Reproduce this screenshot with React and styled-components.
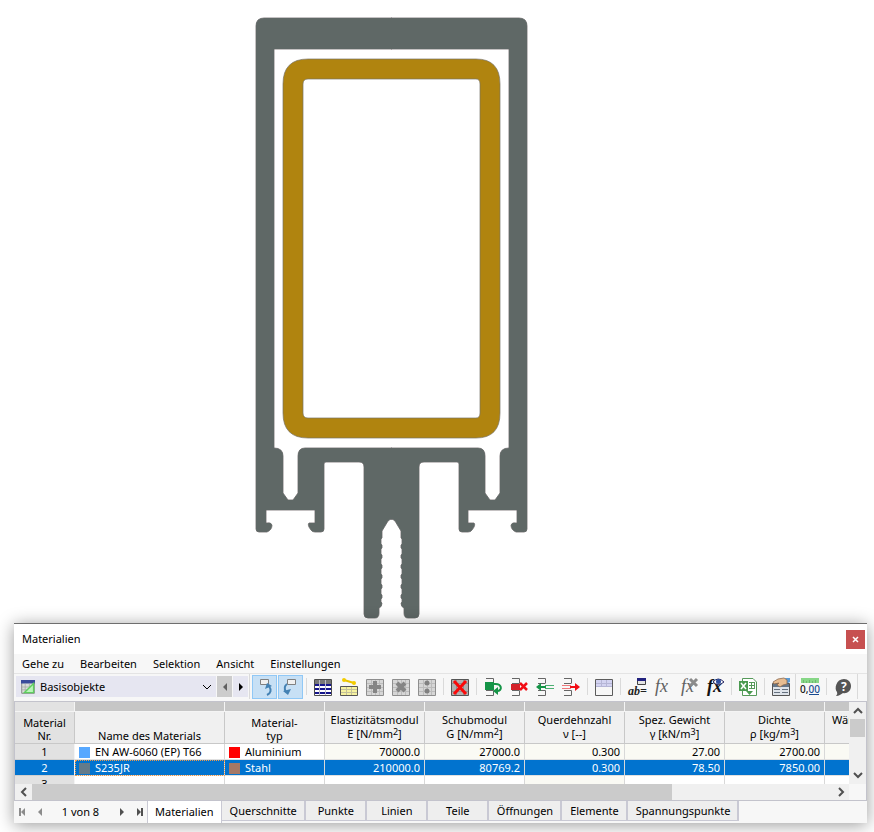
import React, { useState } from "react";
import styled, { createGlobalStyle, css } from "styled-components";

const GlobalStyle = createGlobalStyle`
  * {
    box-sizing: border-box;
  }

  body {
    margin: 0;
    background: #ffffff;
    color: #000000;
    font-family: "Noto Sans", "Open Sans", sans-serif;
    font-size: 11px;
    line-height: 16px;
  }

  button,
  select {
    margin: 0;
    padding: 0;
    border: 0;
    color: inherit;
    font: inherit;
  }

  svg {
    display: block;
    flex: none;
    overflow: visible;
  }
`;

const Page = styled.main`
  display: flex;
  flex-direction: column;
  min-height: 100vh;
  overflow: hidden;
`;

const Canvas = styled.section`
  height: 623px;
`;

const Window = styled.section`
  margin: 0 7px 9px 14px;
  background: #f7f7f7;
  border-top: 1px solid #6e6e6e;
  box-shadow: 0 2px 16px rgba(0, 0, 0, 0.4);
`;

const TitleBar = styled.header`
  display: flex;
  align-items: center;
  justify-content: space-between;
  height: 30px;
  padding: 0 2px 0 8px;
  background: #ffffff;
`;

const Title = styled.h1`
  margin: 0;
  font-size: 11px;
  font-weight: 400;
`;

const CloseButton = styled.button`
  display: flex;
  align-items: center;
  justify-content: center;
  width: 19px;
  height: 19px;
  background: #c75050;
  color: #ffffff;
`;

const MenuBar = styled.nav`
  display: flex;
  align-items: center;
  gap: 16px;
  height: 20px;
  padding: 0 8px;
  border-bottom: 1px solid #e4e4e4;
`;

const MenuItem = styled.button`
  background: none;
`;

const Toolbar = styled.div`
  display: flex;
  align-items: center;
  height: 27px;
  padding: 0 0 2px 2px;
`;

const TableSelect = styled.label`
  display: grid;
  align-items: center;
  width: 200px;
  height: 21px;
  background: #e6e6f1;

  > * {
    grid-area: 1 / 1;
  }

  > svg {
    margin-left: 5px;
    pointer-events: none;
  }

  > svg:last-child {
    justify-self: end;
    margin-right: 4px;
  }
`;

const Select = styled.select`
  appearance: none;
  width: 100%;
  height: 21px;
  padding-left: 24px;
  background: transparent;
`;

const StepButton = styled.button`
  display: flex;
  align-items: center;
  justify-content: center;
  width: 15px;
  height: 21px;
  margin-left: 1px;
  background: ${({ $dim }) => ($dim ? "#cccccc" : "#e6e6f1")};
  color: ${({ $dim }) => ($dim ? "#606060" : "#000000")};
`;

const ToolButton = styled.button`
  display: flex;
  align-items: center;
  justify-content: center;
  width: 26px;
  height: 24px;
  background: none;

  ${({ $pressed }) =>
    $pressed &&
    css`
      width: 25px;
      margin-left: 1px;
      background: #c7e0f5;
      border: 1px solid #90c8f6;
    `}
`;

const Divider = styled.span`
  align-self: stretch;
  width: 1px;
  margin: ${({ $tight }) => ($tight ? "0 1px" : "4px 3px")};
  background: #dadada;
`;

const Grid = styled.div`
  display: grid;
  grid-template-columns: minmax(0, 1fr) 17px;
  border: 1px solid #c3c3cc;
`;

const TableClip = styled.div`
  height: 82px;
  overflow: hidden;
`;

const Table = styled.table`
  width: 910px;
  table-layout: fixed;
  border-collapse: separate;
  border-spacing: 0;
  background: #ffffff;
`;

const StripCell = styled.td`
  height: 10px;
  padding: 0;
  background: ${({ $corner }) => ($corner ? "#e2e2e2" : "#c6c6c6")};
  border-right: 1px solid #f4f4f4;
  border-bottom: 1px solid #f4f4f4;
`;

const HeadCell = styled.th`
  height: 32px;
  padding: ${({ $text }) => ($text ? "0 0 1px" : "0 0 2px")};
  vertical-align: bottom;
  background: ${({ $corner }) => ($corner ? "#e2e2e2" : "#f0f0f0")};
  border-right: 1px solid #c8c8c8;
  border-bottom: 1px solid #c8c8c8;
  font-weight: 400;
  line-height: ${({ $text }) => ($text ? "13px" : "14px")};
  white-space: pre-line;

  sup {
    font-size: 9px;
    line-height: 0;
    vertical-align: 3px;
  }
`;

const Cell = styled.td`
  height: 16px;
  padding: 0 4px;
  overflow: hidden;
  background: ${({ $number, $blank }) => ($number && !$blank ? "#fafaf4" : "#ffffff")};
  border-right: 1px solid #d8d8d8;
  border-bottom: 1px solid #e0e0e0;
  line-height: 15px;
  text-align: ${({ $number }) => ($number ? "right" : "left")};
  white-space: nowrap;
`;

const RowHead = styled.th`
  height: 16px;
  padding: 0;
  background: #e2e2e2;
  border-right: 1px solid #f4f4f4;
  border-bottom: 1px solid #cfcfcf;
  font-weight: 400;
  line-height: 15px;
`;

const Row = styled.tr`
  ${({ $selected }) =>
    $selected &&
    css`
      color: #ffffff;

      ${Cell}, ${RowHead} {
        background: #0173cf;
      }

      ${Cell}:nth-child(2) {
        outline: 1px dotted #f09a4a;
        outline-offset: -1px;
      }
    `}
`;

const Swatch = styled.span`
  display: inline-block;
  width: 11px;
  height: 11px;
  margin-right: 5px;
  background: ${({ $color }) => $color};
  vertical-align: -2px;
`;

const VerticalScroll = styled.div`
  display: flex;
  flex-direction: column;
  align-items: center;
  padding: 1px;
  background: #f0f0f0;
`;

const HorizontalScroll = styled.div`
  display: flex;
  align-items: center;
  height: 16px;
  background: #f0f0f0;
`;

const ScrollButton = styled.button`
  display: flex;
  align-items: center;
  justify-content: center;
  width: 17px;
  height: 16px;
  background: none;
  color: #505050;
`;

const ScrollTrack = styled.div`
  flex: 1;
  align-self: stretch;
`;

const ScrollThumb = styled.div`
  background: #cbcbcb;
  width: ${({ $vertical }) => ($vertical ? "15px" : "80%")};
  height: ${({ $vertical }) => ($vertical ? "18px" : "16px")};
`;

const Footer = styled.footer`
  display: flex;
  align-items: flex-start;
  height: 22px;
`;

const Pager = styled.div`
  display: flex;
  align-items: center;
  width: 133px;
  height: 22px;
`;

const PagerButton = styled.button`
  display: flex;
  align-items: center;
  justify-content: center;
  width: 17px;
  height: 20px;
  background: none;
  color: ${({ disabled }) => (disabled ? "#8c8c8c" : "#505050")};
`;

const PageLabel = styled.span`
  flex: 1;
  text-align: center;
`;

const Tab = styled.button`
  min-width: 61px;
  height: 20px;
  padding: 0 7px 0 8px;
  background: #eeeeee;
  border-right: 2px solid #c9c9d4;
  border-bottom: 1px solid #c9c9d4;
  white-space: nowrap;

  ${({ $active }) =>
    $active &&
    css`
      height: 22px;
      padding: 0 7px;
      background: #ffffff;
      border-left: 1px solid #c9c9d4;
      border-right: 1px solid #c9c9d4;
      border-bottom: 0;
    `}
`;

// right half is the mirror image of the left half
const PROFILE_HALF =
  "M392 18H264Q256 18 256 26V529Q256 532 259 532H267Q272 530 272 525Q271 522 267 523H266V510H315V523H309Q307 525 311 530Q312 532 315 532H321Q324 532 324 529V464Q324 462 326 462H359Q364 462 364 467V614Q364 618 368 618H375Q379 618 379 613V608Q382 607 382 603L381 602V599L382 598V595L381 594V589L382 588V585L381 584V579L382 578V575L381 574V569L382 568V565L381 564V559L382 558V555L381 554V549L382 548V545L381 544V539L382 538V531L388 521Q390 519 392 519V448H305Q298 448 298 456V493L293 500H288L283 493V456Q283 448 274 448V49H392Z";

const PROFILE_EDGE = PROFILE_HALF.replace("V448H305", "M392 448H305").replace("H392Z", "H392");

const MIRROR = "translate(783 0) scale(-1 1)";

function CrossSection() {
  return (
    <svg width="874" height="623" viewBox="0 0 874 623" role="img" aria-label="Querschnitt">
      <path d={PROFILE_EDGE} fill="none" stroke="#6c6567" strokeWidth="0.8" />
      <path d={PROFILE_EDGE} transform={MIRROR} fill="none" stroke="#6c6567" strokeWidth="0.8" />
      <path d={PROFILE_HALF} fill="#5f6866" />
      <path d={PROFILE_HALF} transform={MIRROR} fill="#5f6866" />
      <path
        d="M308 59H476Q500 59 500 84V413Q500 438 476 438H308Q283 438 283 413V84Q283 59 308 59ZM308 79Q303 79 303 84V413Q303 418 308 418H476Q480 418 480 413V84Q480 79 476 79Z"
        fill="#b0840f"
        fillRule="evenodd"
        stroke="#777368"
        strokeWidth="0.7"
      />
    </svg>
  );
}

const Arrow = ({ left, bar }) => (
  <svg width="10" height="10" viewBox="0 0 10 10" fill="currentColor">
    <g transform={left ? "translate(10 0) scale(-1 1)" : undefined}>
      <path d="M3 1L7 5L3 9Z" />
      {bar && <path d="M7 1H9V9H7Z" />}
    </g>
  </svg>
);

const CHEVRONS = {
  up: "M1 7L5 3L9 7",
  down: "M1 3L5 7L9 3",
  left: "M7 1L3 5L7 9",
  right: "M3 1L7 5L3 9",
};

const Chevron = ({ to, thin }) => (
  <svg width="10" height="10" viewBox="0 0 10 10" fill="none" stroke="currentColor">
    <path d={CHEVRONS[to]} strokeWidth={thin ? 1 : 2} />
  </svg>
);

const Icon = ({ children, size = 20 }) => (
  <svg width={size} height={size} viewBox="0 0 20 20" fill="none" aria-hidden="true">
    {children}
  </svg>
);

const GreyBox = () => (
  <>
    <path d="M1.5 2.5H18.5V18.5H1.5Z" fill="#d6d6d6" stroke="#8e8e8e" />
    <path d="M2 6.5H18M2 10.5H18M2 14.5H18M6.5 3V18M10.5 3V18M14.5 3V18" stroke="#bcbcbc" />
  </>
);

const OpenRows = () => (
  <path d="M3 1.5H10.5V6M3 6.5H10.5M3 13.5H10.5V18.5H3" stroke="#666666" />
);

const Fx = ({ color, bold }) => (
  <text
    x="2"
    y="15"
    fill={color}
    fontFamily="Liberation Serif, serif"
    fontSize="18"
    fontStyle="italic"
    fontWeight={bold ? 700 : 400}
  >
    fx
  </text>
);

const icons = {
  table: (
    <>
      <path d="M1.5 2.5H18.5V18.5H1.5Z" fill="#ffffff" stroke="#4d4d4d" />
      <path d="M2 3H18V7H2Z" fill="#777777" />
      <path d="M2 8H18M2 12H18M2 16H18" stroke="#15158c" strokeWidth="2" />
      <path d="M6.5 3V18M12.5 3V18" stroke="#b9b9c9" />
    </>
  ),
  tableLine: (
    <>
      <path d="M5 3L15 6" stroke="#e9c400" strokeWidth="2" />
      <circle cx="5" cy="3" r="2" fill="#f3cc00" />
      <circle cx="15" cy="6" r="2" fill="#f3cc00" />
      <path d="M1.5 9.5H18.5V18.5H1.5Z" fill="#f6f2a0" stroke="#555555" />
      <path d="M2 12.5H18M2 15.5H18M7.5 10V18M12.5 10V18" stroke="#c4c19a" />
    </>
  ),
  add: (
    <>
      <GreyBox />
      <path d="M10 4V16M4 10H16" stroke="#858585" strokeWidth="4" />
    </>
  ),
  remove: (
    <>
      <GreyBox />
      <path d="M6 6L14 14M14 6L6 14" stroke="#858585" strokeWidth="4" />
    </>
  ),
  points: (
    <>
      <GreyBox />
      <circle cx="10" cy="6" r="2.5" fill="#808080" />
      <circle cx="10" cy="14" r="2.5" fill="#808080" />
    </>
  ),
  clear: (
    <>
      <path d="M1.5 2.5H18.5V18.5H1.5Z" fill="#b0b0b0" stroke="#555555" />
      <path d="M2 6.5H18M2 14.5H18M6.5 3V18M13.5 3V18" stroke="#909090" />
      <path d="M4 4L16 17M16 4L4 17" stroke="#fb0808" strokeWidth="3" />
    </>
  ),
  rowReturn: (
    <>
      <OpenRows />
      <path d="M2 5H11V13H2Z" fill="#159447" />
      <path d="M11 7C19 6 20 14 14 14" stroke="#159447" strokeWidth="2" />
      <path d="M10 14L15 10V18Z" fill="#159447" />
    </>
  ),
  rowDelete: (
    <>
      <OpenRows />
      <path d="M2 7H11V13H2Z" fill="#d5222a" />
      <path d="M11 6L18 13M18 6L11 13" stroke="#f20d15" strokeWidth="2.5" />
    </>
  ),
  rowInsert: (
    <>
      <OpenRows />
      <path d="M1 10L6 6V9H11V11H6V14Z" fill="#159447" />
      <path d="M10 8.5H19M10 11.5H19" stroke="#4caf72" />
    </>
  ),
  rowExtract: (
    <>
      <OpenRows />
      <path d="M19 10L14 6V9H9V11H14V14Z" fill="#f20d15" />
      <path d="M1 8.5H10M1 11.5H10" stroke="#f0777b" />
    </>
  ),
  view: (
    <>
      <path d="M2 3H18V9H2Z" fill="#d3d3f1" />
      <path d="M2 6.5H18M2 9.5H18M7.5 3V9M12.5 3V9" stroke="#b6b6d6" />
      <path d="M1.5 2.5H18.5V18.5H1.5Z" stroke="#5c5c5c" />
    </>
  ),
  assign: (
    <>
      <path d="M10.5 1.5H18.5V7.5H10.5Z" fill="#e4e4e4" stroke="#444444" />
      <path d="M10 1H19V4H10Z" fill="#22227e" />
      <text x="1" y="18" fill="#222222" fontFamily="Liberation Serif, serif" fontSize="12" fontStyle="italic" fontWeight="700">
        ab=
      </text>
    </>
  ),
  fx: <Fx color="#606060" />,
  fxDelete: (
    <>
      <Fx color="#606060" />
      <path d="M11 2L18 9M18 2L11 9" stroke="#8b8b8b" strokeWidth="3" />
    </>
  ),
  fxView: (
    <>
      <Fx color="#111111" bold />
      <path d="M8 5Q13 -1 19 5Q13 10 8 5Z" fill="#ffffff" stroke="#22225e" />
      <circle cx="13.5" cy="4.5" r="2.5" fill="#2d4fa0" />
    </>
  ),
  excel: (
    <>
      <path d="M4.5 1.5H15L18.5 5V18.5H4.5Z" fill="#ffffff" stroke="#569a5a" />
      <path d="M1 4H10V14H1Z" fill="#4b9a50" />
      <path d="M3 6L8 12M8 6L3 12" stroke="#ffffff" strokeWidth="1.5" />
      <path d="M11 5.5H17M11 8.5H17M11 11.5H17M13.5 5V12M16.5 5V12" stroke="#569a5a" />
      <path d="M8 14H15L11.5 18Z" fill="#4b9a50" />
    </>
  ),
  card: (
    <>
      <path d="M1.5 6.5H18.5V18.5H1.5Z" fill="#dfe4ea" stroke="#555555" />
      <path d="M2 7H18V10H2Z" fill="#667789" />
      <path d="M3 12.5H9M3 15.5H9M11 12.5H17M11 15.5H17" stroke="#65717f" />
      <path d="M14 1H19V5L15 7Z" fill="#5b9bd5" />
      <path d="M2 5L7 2L13 1L16 3V7L12 8L9 10L6 8L8 6L3 7Z" fill="#e8bd91" stroke="#8d6a4f" strokeWidth="0.8" />
    </>
  ),
  decimals: (
    <>
      <path d="M1 1H19V6H1Z" fill="#87d787" />
      <path d="M3.5 3V6M6.5 4V6M9.5 3V6M12.5 4V6M15.5 3V6" stroke="#6fb56f" />
      <text x="0" y="16" fill="#111111" fontSize="10" fontWeight="500">
        0,<tspan fill="#184a90">00</tspan>
      </text>
      <path d="M9 17.5H19" stroke="#184a90" />
    </>
  ),
  help: (
    <>
      <path d="M11 2C15 2 18 5 18 9C18 14 14 17 10 16C8 17 6 19 3 19Q5 17 4 15C1 12 3 2 11 2Z" fill="#555555" />
      <text x="8" y="14" fill="#ffffff" fontSize="12" fontWeight="700">
        ?
      </text>
    </>
  ),
  goUp: (
    <>
      <path d="M5.5 2.5H13.5V7.5H5.5Z" fill="#f0f0f0" stroke="#808080" />
      <path d="M12 18Q18 15 14 9" stroke="#4482b4" strokeWidth="2" />
      <path d="M10 12L12 6L17 9Z" fill="#4482b4" />
    </>
  ),
  goDown: (
    <>
      <path d="M6.5 2.5H14.5V7.5H6.5Z" fill="#f0f0f0" stroke="#808080" />
      <path d="M6 7Q2 10 5 15" stroke="#4482b4" strokeWidth="2" />
      <path d="M2 14L10 12L7 18Z" fill="#4482b4" />
    </>
  ),
};

const toolGroups = [
  [
    ["table", "Tabelle"],
    ["tableLine", "Tabelle mit Objekt"],
    ["add", "Hinzufügen"],
    ["remove", "Entfernen"],
    ["points", "Punkte"],
  ],
  [["clear", "Löschen"]],
  [
    ["rowReturn", "Zeile übernehmen"],
    ["rowDelete", "Zeile löschen"],
    ["rowInsert", "Zeile einfügen"],
    ["rowExtract", "Zeile ausschneiden"],
  ],
  [["view", "Ansicht"]],
  [
    ["assign", "Parameter"],
    ["fx", "Formel"],
    ["fxDelete", "Formel löschen"],
    ["fxView", "Formel anzeigen"],
  ],
  [["excel", "Excel-Export"]],
  [["card", "Bibliothek"]],
  [["decimals", "Dezimalstellen"]],
  [["help", "Hilfe"]],
];

const columns = [
  { width: 150, head: "Name des Materials", text: true },
  { width: 100, head: "Material-\ntyp", text: true },
  { width: 100, head: "Elastizitätsmodul\nE [N/mm", sup: "2" },
  { width: 100, head: "Schubmodul\nG [N/mm", sup: "2" },
  { width: 100, head: "Querdehnzahl\nν [--]" },
  { width: 100, head: "Spez. Gewicht\nγ [kN/m", sup: "3" },
  { width: 100, head: "Dichte\nρ [kg/m", sup: "3" },
  { width: 100, head: "Wärmedehnzahl\nα [1/°C]" },
];

const materials = [
  {
    name: "EN AW-6060 (EP) T66",
    color: "#57a8ff",
    type: "Aluminium",
    typeColor: "#ff0000",
    values: ["70000.0", "27000.0", "0.300", "27.00", "2700.00", ""],
  },
  {
    name: "S235JR",
    color: "#647b8a",
    type: "Stahl",
    typeColor: "#a57866",
    values: ["210000.0", "80769.2", "0.300", "78.50", "7850.00", ""],
  },
];

const tabs = [
  "Materialien",
  "Querschnitte",
  "Punkte",
  "Linien",
  "Teile",
  "Öffnungen",
  "Elemente",
  "Spannungspunkte",
];

function MaterialTable({ selected, onSelect }) {
  return (
    <Table>
      <colgroup>
        <col style={{ width: 60 }} />
        {columns.map((column) => (
          <col key={column.head} style={{ width: column.width }} />
        ))}
      </colgroup>
      <thead>
        <tr>
          <StripCell $corner />
          {columns.map((column) => (
            <StripCell key={column.head} />
          ))}
        </tr>
        <tr>
          <HeadCell $corner $text scope="col">
            {"Material\nNr."}
          </HeadCell>
          {columns.map((column) => (
            <HeadCell key={column.head} $text={column.text} scope="col">
              {column.head}
              {column.sup && (
                <>
                  <sup>{column.sup}</sup>]
                </>
              )}
            </HeadCell>
          ))}
        </tr>
      </thead>
      <tbody>
        {materials.map((material, i) => (
          <Row key={material.name} $selected={i === selected} onClick={() => onSelect(i)}>
            <RowHead scope="row">{i + 1}</RowHead>
            <Cell>
              <Swatch $color={material.color} />
              {material.name}
            </Cell>
            <Cell>
              <Swatch $color={material.typeColor} />
              {material.type}
            </Cell>
            {material.values.map((value, j) => (
              <Cell key={j} $number>
                {value}
              </Cell>
            ))}
          </Row>
        ))}
        <Row>
          <RowHead scope="row">3</RowHead>
          {columns.map((column, i) => (
            <Cell key={column.head} $number={i > 1} $blank={i !== 4} />
          ))}
        </Row>
      </tbody>
    </Table>
  );
}

const App = () => {
  const [tab, setTab] = useState("Materialien");
  const [selected, setSelected] = useState(1);

  return (
    <Page>
      <GlobalStyle />
      <Canvas>
        <CrossSection />
      </Canvas>
      <Window>
        <TitleBar>
          <Title>Materialien</Title>
          <CloseButton aria-label="Schließen">
            <svg width="7" height="7" viewBox="0 0 7 7" stroke="currentColor" strokeWidth="1.5">
              <path d="M1 1L6 6M6 1L1 6" />
            </svg>
          </CloseButton>
        </TitleBar>
        <MenuBar>
          {["Gehe zu", "Bearbeiten", "Selektion", "Ansicht", "Einstellungen"].map((item) => (
            <MenuItem key={item}>{item}</MenuItem>
          ))}
        </MenuBar>
        <Toolbar>
          <TableSelect>
            <Icon size={14}>
              <path d="M1 1H19V19H1Z" fill="#d9ddd9" stroke="#666666" />
              <path d="M0 0H20V5H0Z" fill="#3a4b9b" />
              <path d="M1 10H19M1 14H19M6 5V19M12 5V19" stroke="#a5a5a5" />
              <path d="M5 18L18 5V18Z" fill="#baf5ba" stroke="#5fce5f" strokeWidth="2" />
            </Icon>
            <Select aria-label="Tabelle" defaultValue="Basisobjekte">
              <option>Basisobjekte</option>
            </Select>
            <Chevron to="down" thin />
          </TableSelect>
          <StepButton $dim aria-label="Vorherige Tabelle">
            <Arrow left />
          </StepButton>
          <StepButton aria-label="Nächste Tabelle">
            <Arrow />
          </StepButton>
          <Divider $tight />
          <ToolButton $pressed aria-label="Selektion übernehmen">
            <Icon>{icons.goUp}</Icon>
          </ToolButton>
          <ToolButton $pressed aria-label="Selektion anzeigen">
            <Icon>{icons.goDown}</Icon>
          </ToolButton>
          {toolGroups.map((group, i) => (
            <React.Fragment key={i}>
              <Divider $tight={i === 7} />
              {group.map(([name, label]) => (
                <ToolButton key={name} aria-label={label}>
                  <Icon>{icons[name]}</Icon>
                </ToolButton>
              ))}
            </React.Fragment>
          ))}
          <Divider $tight />
        </Toolbar>
        <Grid>
          <TableClip>
            <MaterialTable selected={selected} onSelect={setSelected} />
          </TableClip>
          <VerticalScroll>
            <ScrollButton aria-label="Nach oben">
              <Chevron to="up" />
            </ScrollButton>
            <ScrollThumb $vertical />
            <ScrollTrack />
            <ScrollButton aria-label="Nach unten">
              <Chevron to="down" />
            </ScrollButton>
          </VerticalScroll>
          <HorizontalScroll>
            <ScrollButton aria-label="Nach links">
              <Chevron to="left" />
            </ScrollButton>
            <ScrollTrack>
              <ScrollThumb />
            </ScrollTrack>
            <ScrollButton aria-label="Nach rechts">
              <Chevron to="right" />
            </ScrollButton>
          </HorizontalScroll>
        </Grid>
        <Footer>
          <Pager>
            <PagerButton disabled aria-label="Erste Tabelle">
              <Arrow left bar />
            </PagerButton>
            <PagerButton disabled aria-label="Zurück">
              <Arrow left />
            </PagerButton>
            <PageLabel>1 von 8</PageLabel>
            <PagerButton aria-label="Weiter">
              <Arrow />
            </PagerButton>
            <PagerButton aria-label="Letzte Tabelle">
              <Arrow bar />
            </PagerButton>
          </Pager>
          {tabs.map((name) => (
            <Tab key={name} $active={name === tab} onClick={() => setTab(name)}>
              {name}
            </Tab>
          ))}
        </Footer>
      </Window>
    </Page>
  );
};

export default App;
